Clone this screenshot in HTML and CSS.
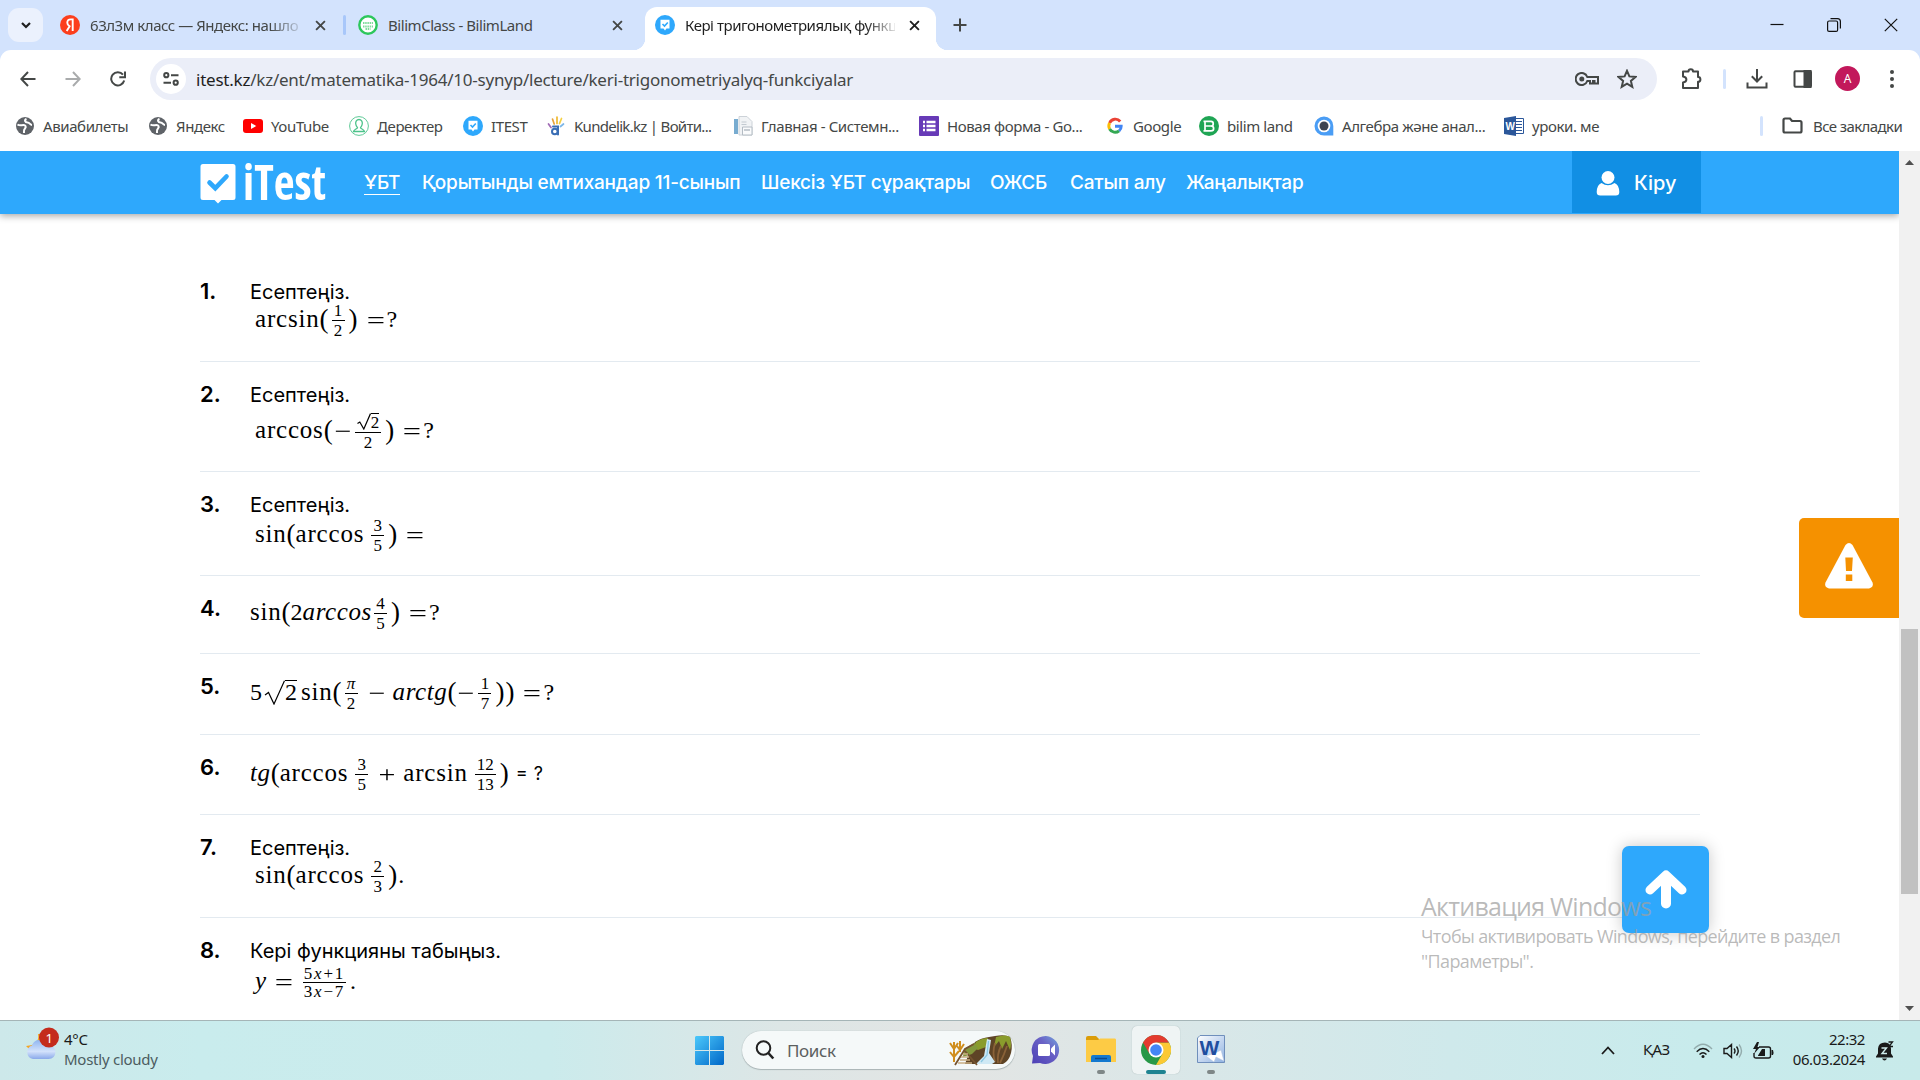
FILE: index.html
```html
<!DOCTYPE html>
<html lang="kk">

<head>
  <meta charset="UTF-8">
  <meta name="viewport" content="width=device-width, initial-scale=1.0">
  <title>Кері тригонометриялық функциялар</title>
  <link rel="stylesheet" href="styles.css">
</head>

<body>
  <!-- tabs -->
  <div class="tabstrip">
    <div class="tab-search"><svg width="12" height="12" viewBox="0 0 12 12"><path d="M2 4l4 4 4-4" fill="none" stroke="#1f1f1f" stroke-width="2.2"/></svg></div>
    <div class="tab tab-one">
      <svg class="fav" viewBox="0 0 20 20"><circle cx="10" cy="10" r="10" fill="#fc3f1d"/><path d="M12.7 16V4.4h-1.8c-2.4 0-3.6 1.4-3.6 3.3 0 1.8.9 2.7 2.3 3.6L6.7 16" fill="none" stroke="#fff" stroke-width="1.900"/></svg>
      <span class="tab-title fade">63л3м класс — Яндекс: нашло</span>
      <svg class="close" viewBox="0 0 10 10"><path d="M1 1l8 8M9 1l-8 8"/></svg>
    </div>
    <div class="tab tab-two">
      <svg class="fav" viewBox="0 0 20 20"><circle cx="10" cy="10" r="8.700" fill="#fff" stroke="#2dc75c" stroke-width="2.400"/><path d="M5 8h10M5 11.500h10M7.500 14h5" stroke="#7fdc9c" stroke-width="1.800" stroke-dasharray="1.500 .7"/></svg>
      <span class="tab-title">BilimClass - BilimLand</span>
      <svg class="close" viewBox="0 0 10 10"><path d="M1 1l8 8M9 1l-8 8"/></svg>
    </div>
    <div class="tab tab-active">
      <svg class="fav" viewBox="0 0 20 20"><circle cx="10" cy="10" r="10" fill="#2ea8fc"/><path d="M5.500 4.800h9v8.800h-3L10 15.600l-1.500-2h-3z" fill="#fff"/><path d="M7.500 9l2 2 3.300-3.500" fill="none" stroke="#2ea8fc" stroke-width="1.600"/></svg>
      <span class="tab-title fade">Кері тригонометриялық функц</span>
      <svg class="close dark" viewBox="0 0 10 10"><path d="M1 1l8 8M9 1l-8 8"/></svg>
    </div>
    <svg class="new-tab" width="14" height="14" viewBox="0 0 14 14"><path d="M7 .500v13M.500 7h13" stroke="#444746" stroke-width="2"/></svg>
    <div class="window-buttons">
      <svg width="14" height="14" viewBox="0 0 14 14"><path d="M.500 6.500h13" stroke="#111" stroke-width="1.200"/></svg>
      <svg width="14" height="14" viewBox="0 0 14 14"><rect x=".600" y="3" width="10" height="10.400" rx="1.500"/><path d="M3.500.700h7q2.900 0 2.900 2.900v7"/></svg>
      <svg width="14" height="14" viewBox="0 0 14 14"><path d="M.800.800l12.400 12.400M13.200.800L.800 13.200"/></svg>
    </div>
  </div>

  <!-- address bar -->
  <div class="toolbar-wrap">
    <div class="toolbar">
      <svg class="t-icon" viewBox="0 0 16 16"><path d="M15.500 8H1.500M8 1L1.300 8 8 15"/></svg>
      <svg class="t-icon off" viewBox="0 0 16 16"><path d="M.500 8h14M8 1l6.700 7L8 15"/></svg>
      <svg class="t-icon" viewBox="0 0 16 16"><path d="M14.200 9.500A6.600 6.600 0 1 1 13 3.700M15 .500v5.800H9.300"/></svg>
      <div class="omnibox">
        <div class="site-info"><svg width="16" height="14" viewBox="0 0 16 14"><circle cx="3.300" cy="3.200" r="2.100"/><path d="M8 3.200h7.500M.500 10.700H8"/><circle cx="12.700" cy="10.700" r="2.100"/></svg></div>
        <span class="url"><b>itest.kz</b>/kz/ent/matematika-1964/10-synyp/lecture/keri-trigonometriyalyq-funkciyalar</span>
        <svg class="key" width="24" height="14" viewBox="0 0 24 14"><path d="M12.300 5A6 6 0 1 0 12.300 9H15v2.500h3V9h1.500v2.500H23V5z"/><circle cx="6.800" cy="7" r="2.500" fill="#444746" stroke="none"/></svg>
        <svg width="20" height="20" viewBox="0 0 20 20"><path d="M10 1.800l2.400 5.600 6.100.5-4.600 4 1.400 6L10 14.700l-5.300 3.200 1.400-6-4.600-4 6.100-.5z"/></svg>
      </div>
      <svg class="puzzle" width="22" height="22" viewBox="0 0 22 22"><path d="M2 3.500h5.500a2 2 0 0 1 4.500 0h5V9a2.300 2.300 0 0 1 0 4.800V20H2v-5.500c4.500-.5 4.500-5.500 0-6z" stroke-linejoin="round"/></svg>
      <i class="divider"></i>
      <svg width="22" height="20" viewBox="0 0 22 20"><path d="M11 0v12M5.800 7.300L11 12.500l5.200-5.200M1.500 13.500v5h19v-5"/></svg>
      <svg width="20" height="18" viewBox="0 0 20 18"><rect x="1.500" y="1.300" width="16.500" height="15.400" rx="1"/><path d="M11.500 1h6v16h-6z" fill="#444746"/></svg>
      <div class="avatar">A</div>
      <svg width="6" height="20" viewBox="0 0 6 20" class="kebab"><circle cx="3" cy="3" r="2"/><circle cx="3" cy="10" r="2"/><circle cx="3" cy="17" r="2"/></svg>
    </div>
  </div>

  <!-- bookmarks -->
  <div class="bookmarks">
    <div class="bm"><svg viewBox="0 0 20 20"><circle cx="10" cy="10" r="9" fill="#5f6368"/><path d="M2.500 8.500c2.500 1.500 4 .500 6 .500s3 2 1.500 3.500-1 2.500-1 4.500M11.500 3c-2.500 1-1.500 3.500 1 3.500S15 9 17 9" fill="none" stroke="#fff" stroke-width="2"/></svg>Авиабилеты</div>
    <div class="bm"><svg viewBox="0 0 20 20"><circle cx="10" cy="10" r="9" fill="#5f6368"/><path d="M2.500 8.500c2.500 1.500 4 .500 6 .500s3 2 1.500 3.500-1 2.500-1 4.500M11.500 3c-2.500 1-1.500 3.500 1 3.500S15 9 17 9" fill="none" stroke="#fff" stroke-width="2"/></svg>Яндекс</div>
    <div class="bm"><svg viewBox="0 0 20 20"><rect y="3" width="20" height="14" rx="3" fill="#f00"/><path d="M8 7l5.300 3L8 13z" fill="#fff"/></svg>YouTube</div>
    <div class="bm"><svg viewBox="0 0 20 20" fill="none" stroke="#4cc38a"><circle cx="10" cy="10" r="9.400" stroke-width=".9"/><path d="M10 3.500c-2.500 0-3.500 2-3.300 4.300.2 2 1 3 1.800 3.800-.3 1.400-3.500 1.500-4 3.900h11c-.5-2.400-3.700-2.500-4-3.900.8-.8 1.600-1.800 1.800-3.800.2-2.300-.8-4.300-3.300-4.300z" stroke-width="1.300"/></svg>Деректер</div>
    <div class="bm"><svg viewBox="0 0 20 20"><circle cx="10" cy="10" r="10" fill="#2ea8fc"/><path d="M5.500 4.800h9v8.800h-3L10 15.600l-1.500-2h-3z" fill="#fff"/><path d="M7.500 9l2 2 3.300-3.500" fill="none" stroke="#2ea8fc" stroke-width="1.600"/></svg>ITEST</div>
    <div class="bm tight"><svg viewBox="0 0 20 20" fill="none" stroke-linecap="round"><path d="M2.500 8L5 11.500" stroke="#a06bb5" stroke-width="1.700"/><path d="M6.500 3l1.700 5" stroke="#e8a33b" stroke-width="1.700"/><path d="M11 1v6.500" stroke="#efb92f" stroke-width="1.700"/><path d="M15.500 2.500l-2 5" stroke="#f4d044" stroke-width="1.700"/><path d="M17.500 8l-3 2.500" stroke="#7db7e8" stroke-width="1.700"/><circle cx="8.800" cy="15.500" r="2.800" stroke="#3a6eb5" stroke-width="2"/><path d="M7 10.500h5v8" stroke="#3a6eb5" stroke-width="2"/></svg>Kundelik.kz | Войти...</div>
    <div class="bm"><svg viewBox="0 0 20 20"><path d="M1 3h4v15H1z" fill="#78acd0"/><path d="M6 .500h8l5 5V19H6z" fill="#f1f3f5" stroke="#ccd2d8"/><path d="M8.500 6h5M8.500 8.500h5" stroke="#c3cad1"/><path d="M9.500 11h9.500v8H9.500z" fill="#fafbfc" stroke="#b4bcc4"/><path d="M11 14h6" stroke="#b4bcc4" stroke-width="1.500"/></svg>Главная - Системн...</div>
    <div class="bm"><svg viewBox="0 0 20 20"><rect width="20" height="20" rx="1" fill="#673ab7"/><path d="M4 6h2M4 10h2M4 14h2M7.500 6h9M7.500 10h9M7.500 14h9" stroke="#fff" stroke-width="2.300"/></svg>Новая форма - Go...</div>
    <div class="bm"><svg viewBox="0 0 20 20" fill="none" stroke-width="2.900"><path d="M15.200 5.500A6.200 6.200 0 0 0 4.600 7" stroke="#ea4335"/><path d="M4.600 7a6.300 6.300 0 0 0 0 6" stroke="#fbbc05"/><path d="M4.600 13a6.200 6.200 0 0 0 9.500 1.800" stroke="#34a853"/><path d="M10 10.200h6.200a6 6 0 0 1-2.100 4.600" stroke="#4285f4"/></svg>Google</div>
    <div class="bm"><svg viewBox="0 0 20 20"><circle cx="10" cy="10" r="10" fill="#1fa554"/><path d="M4.500 5.300H12c3 0 3 4.700 0 4.700H6M12 10c3.500 0 3.500 4.800 0 4.800H4.500M6 5v10" fill="none" stroke="#fff" stroke-width="1.700"/></svg>bilim land</div>
    <div class="bm"><svg viewBox="0 0 20 20"><path d="M10 .500a9.500 9.500 0 1 0 0 19h9.300V10A9.400 9.400 0 0 0 10 .500z" fill="#4a9df5"/><circle cx="10" cy="10" r="6.300" fill="#fff"/><circle cx="10" cy="10" r="4.500" fill="#3d4450"/></svg>Алгебра және анал...</div>
    <div class="bm"><svg viewBox="0 0 20 20"><path d="M11 2.500h8.500v15H11" fill="#fff" stroke="#2b579a"/><path d="M12 5.500h6M12 8.500h6M12 11.500h6M12 14.500h6" stroke="#2b579a"/><path d="M0 2l12-2v20L0 18z" fill="#2b579a"/><text x="1.600" y="13.500" class="w-small">W</text></svg>уроки. ме</div>
    <div class="all-bm">
      <i class="divider"></i>
      <svg width="21" height="17" viewBox="0 0 21 17"><path d="M1.500 14V3q0-1.500 1.500-1.500h5l2 2.500h8q1.500 0 1.500 1.500V14q0 1.500-1.500 1.500H3q-1.500 0-1.500-1.500z"/></svg>
      <span>Все закладки</span>
    </div>
  </div>

  <div class="viewport">
    <div class="page">
      <header class="site-header">
        <div class="logo">
          <svg width="36" height="40" viewBox="0 0 36 40"><path d="M3 0h30q2.500 0 2.500 2.500v31Q35.500 36 33 36H21.500L18 39.500 14.500 36H3Q.500 36 .500 33.500v-31Q.500 0 3 0z" fill="#fff"/><path d="M9.500 18.500l5.800 5.700L26.500 12.500" fill="none" stroke="#2ea8fc" stroke-width="4.600" stroke-linecap="round"/></svg>
          <span>iTest</span>
        </div>
        <nav class="nav">
          <a class="current">ҰБТ</a>
          <a>Қорытынды емтихандар 11-сынып</a>
          <a>Шексіз ҰБТ сұрақтары</a>
          <a>ОЖСБ</a>
          <a>Сатып алу</a>
          <a>Жаңалықтар</a>
        </nav>
        <div class="login">
          <svg width="24" height="25" viewBox="0 0 24 25" fill="#fff"><ellipse cx="12" cy="6.500" rx="6.500" ry="6.500"/><path d="M5.500 12q6.500 4.500 13 0 4.500 1.500 4.800 9 0 3.500-3.500 3.500H4.200Q.700 24.500.700 21 1 13.500 5.500 12z"/></svg>
          <span>Кіру</span>
        </div>
      </header>

      <ol class="tasks">
        <li class="task h1">
          <b class="num">1.</b>
          <div class="body"><p>Есептеңіз.</p>
            <div class="math in"><span class="fn">arcsin</span><span class="par">(</span><span class="frac"><i>1</i><i>2</i></span><span class="par">)</span><span class="eq">=</span><span>?</span></div></div>
        </li>
        <li class="task h2">
          <b class="num">2.</b>
          <div class="body"><p>Есептеңіз.</p>
            <div class="math in"><span class="fn">arccos</span><span class="par">(</span><span class="neg">−</span><span class="frac"><i><svg class="root" width="14" height="17" viewBox="0 0 14 17"><path d="M.500 10.500l2.300-1.500 4 7L13.500.600"/></svg><u>2</u></i><i>2</i></span><span class="par">)</span><span class="eq">=</span><span>?</span></div></div>
        </li>
        <li class="task h3">
          <b class="num">3.</b>
          <div class="body"><p>Есептеңіз.</p>
            <div class="math in"><span class="fn">sin</span><span class="par">(</span><span class="fn">arccos</span><span class="frac sp"><i>3</i><i>5</i></span><span class="par">)</span><span class="eq">=</span></div></div>
        </li>
        <li class="task h4">
          <b class="num">4.</b>
          <div class="body">
            <div class="math"><span class="fn">sin</span><span class="par">(</span><span>2</span><em>arccos</em><span class="frac"><i>4</i><i>5</i></span><span class="par">)</span><span class="eq">=</span><span>?</span></div></div>
        </li>
        <li class="task h5">
          <b class="num">5.</b>
          <div class="body">
            <div class="math"><span>5</span><svg class="root big" width="21" height="25" viewBox="0 0 21 25"><path d="M1 15l3.500-2.500L10 24 20.500.700"/></svg><u>2</u><span class="fn after-root">sin</span><span class="par">(</span><span class="frac"><i><em>π</em></i><i>2</i></span><span class="bin">−</span><em>arctg</em><span class="par">(</span><span class="neg">−</span><span class="frac"><i>1</i><i>7</i></span><span class="par">)</span><span class="par">)</span><span class="eq">=</span><span>?</span></div></div>
        </li>
        <li class="task h6">
          <b class="num">6.</b>
          <div class="body">
            <div class="math"><em>tg</em><span class="par">(</span><span class="fn">arccos</span><span class="frac sp"><i>3</i><i>5</i></span><span class="bin">+</span><span class="fn">arcsin</span><span class="frac sp"><i>12</i><i>13</i></span><span class="par">)</span><span class="plain">= ?</span></div></div>
        </li>
        <li class="task h7">
          <b class="num">7.</b>
          <div class="body"><p>Есептеңіз.</p>
            <div class="math in"><span class="fn">sin</span><span class="par">(</span><span class="fn">arccos</span><span class="frac sp"><i>2</i><i>3</i></span><span class="par">)</span><span class="dot">.</span></div></div>
        </li>
        <li class="task h8">
          <b class="num">8.</b>
          <div class="body"><p>Кері функцияны табыңыз.</p>
            <div class="math in"><em>y</em><span class="eq">=</span><span class="frac sp poly"><i>5<em>x</em>+1</i><i>3<em>x</em>−7</i></span><span class="dot">.</span></div></div>
        </li>
      </ol>

      <div class="report"><svg width="50" height="46" viewBox="0 0 50 46"><path d="M21.500 2q3.500-4 7 0l20 37.500q1.500 5-3.500 6H5q-5-1-3.500-6z" fill="#fff"/><path d="M21.300 14.500h7.500L28 28h-6zM21.800 31.500h6.500v6.500h-6.500z" fill="#f59100"/></svg></div>
      <div class="to-top"><svg width="42" height="40" viewBox="0 0 42 40"><path d="M5 20L21 5l16 15" fill="none" stroke="#fff" stroke-width="9" stroke-linecap="round" stroke-linejoin="round"/><path d="M21 8v25.500" stroke="#fff" stroke-width="10" stroke-linecap="round"/></svg></div>
    </div>
    <div class="scrollbar">
      <svg width="9" height="5" viewBox="0 0 9 5"><path d="M0 5l4.500-5L9 5z"/></svg>
      <div class="thumb"></div>
      <svg width="9" height="5" viewBox="0 0 9 5"><path d="M0 0l4.500 5L9 0z"/></svg>
    </div>
  </div>

  <div class="activate">
    <h2>Активация Windows</h2>
    <p>Чтобы активировать Windows, перейдите в раздел<br>"Параметры".</p>
  </div>

  <!-- taskbar -->
  <div class="taskbar">
    <div class="weather">
      <svg width="36" height="34" viewBox="0 0 36 34">
        <defs><linearGradient id="cloud" x1="0" y1="0" x2="0" y2="1"><stop offset="0" stop-color="#8fb5f0"/><stop offset=".6" stop-color="#d3e2fb"/><stop offset="1" stop-color="#8aa9ea"/></linearGradient></defs>
        <path d="M13 7q2 11-12 12 4 5 11 4 8-2 6-16z" fill="#f5a623"/>
        <path d="M8 32a7 7 0 0 1-1-13.500q2-6 8-5.500 6 0 8 6 7-1 7.500 6-.5 7-7 7z" fill="url(#cloud)"/>
        <circle cx="24" cy="10.500" r="10" fill="#c42b1c"/><text x="20.500" y="15.500" class="badge">1</text>
      </svg>
      <div class="weather-text"><span>4°C</span><span class="dim">Mostly cloudy</span></div>
    </div>
    <div class="apps">
      <svg class="start" width="29" height="29" viewBox="0 0 29 29"><defs><linearGradient id="win" x1="0" y1="0" x2="1" y2="1"><stop offset="0" stop-color="#4cc9fb"/><stop offset="1" stop-color="#0067c8"/></linearGradient></defs><path d="M1 0h13v14H0V1zM15 0h13l1 1v13H15zM0 15h14v14H1l-1-1zM15 15h14v13l-1 1H15z" fill="url(#win)"/></svg>
      <div class="search">
        <svg width="20" height="20" viewBox="0 0 20 20"><circle cx="8.500" cy="8" r="6.800" fill="none" stroke="#222" stroke-width="2"/><path d="M13.300 13l5 5.500" stroke="#222" stroke-width="2.600"/></svg>
        <span>Поиск</span>
        <svg class="falls" width="64" height="32" viewBox="0 0 64 32">
          <path d="M26 8q6-4 14-5l6-1q10-2 15 1 3 8 1 16-2 8-8 11H16l4-11z" fill="#5e4426"/>
          <path d="M27 8q6-4 12-4l-2 9-8 3-5-2zM47 3q10-3 14 0 2 7 0 13l-4-9-4 8-3-8-5 6z" fill="#8a9c2c"/>
          <path d="M46 9q-3 10 0 19M52 12q-4 8-3 17M58 12q-3 9-7 17" stroke="#8a6238" stroke-width="1.800" fill="none"/>
          <path d="M15 15l10-6 4 5-6 6-9 3z" fill="#83983c"/>
          <path d="M38 5l4 1-2 13 6 9-3 2H27l8-8z" fill="#cfe9f5"/>
          <path d="M39.500 7l-1.500 14-6 7" stroke="#8bc8e3" fill="none" stroke-width="1.300"/>
          <path d="M6 31l10-16 9-5M16 17l12 14" stroke="#75532f" stroke-width="1.800" fill="none"/>
          <path d="M9 29h14M11 26h10M12 23h8M14 20h5" stroke="#c9ae84" stroke-width="1.600"/>
          <path d="M5 8v20M1 9l4 6 4-6M1 18l4 5 5-6M11 7v11M8 12l3 4 4-6" stroke="#d08e1e" stroke-width="2" fill="none"/>
        </svg>
      </div>
      <div class="app meet"><svg width="30" height="30" viewBox="0 0 30 30"><defs><linearGradient id="meet" x1="0" y1="1" x2="1" y2="0"><stop offset="0" stop-color="#4c3fb5"/><stop offset=".6" stop-color="#6a62c6"/><stop offset="1" stop-color="#74a7dd"/></linearGradient></defs><path d="M15 1a14 14 0 1 1-6 27l-8 .500L2 21A14 14 0 0 1 15 1z" fill="url(#meet)"/><rect x="7" y="9" width="12" height="12" rx="1.500" fill="#fff"/><path d="M20 13.500l4-4v11L20 16.500z" fill="#fff"/></svg></div>
      <div class="app folder"><svg width="30" height="28" viewBox="0 0 30 28"><path d="M0 3q0-2 2-2h8l4 4H0z" fill="#db9d09"/><path d="M0 5h12l2-1.500h15q1 0 1 1.500v22H0z" fill="#fdcb45"/><path d="M5 27v-5q0-2 2-2h16q2 0 2 2v5z" fill="#1479cf"/><path d="M9 23.500h12" stroke="#0a4a91" stroke-width="1.500"/></svg><i></i></div>
      <div class="app chrome"><svg width="30" height="30" viewBox="0 0 30 30"><circle cx="15" cy="15" r="15" fill="#279847"/><path d="M28 7.500H15L21.500 18.700 15 30A15 15 0 0 0 28 7.500z" fill="#fcc934"/><path d="M2 7.500L8.500 18.700 15 7.500h13A15 15 0 0 0 2 7.500z" fill="#e33b2e"/><circle cx="15" cy="15" r="7.500" fill="#fff"/><circle cx="15" cy="15" r="5.800" fill="#4386f5"/></svg><i></i></div>
      <div class="app word"><svg width="28" height="28" viewBox="0 0 28 28"><defs><linearGradient id="doc" x1="0" y1="0" x2="1" y2="1"><stop offset="0" stop-color="#fff"/><stop offset="1" stop-color="#8fb2e2"/></linearGradient></defs><path d="M3 .500h24.500v27H.500V3z" fill="url(#doc)" stroke="#6f8fbc"/><path d="M9 21l9-3 6-3 3 11-8-4-2 5z" fill="#fff" stroke="#b1c3df" stroke-width=".5"/><text x="2.500" y="20" class="w-big">W</text></svg><i></i></div>
    </div>
    <div class="tray">
      <svg class="chev" width="14" height="9" viewBox="0 0 14 9"><path d="M1 8l6-6.500L13 8"/></svg>
      <span class="lang">ҚАЗ</span>
      <svg width="20" height="16" viewBox="0 0 20 16"><path d="M1 6q9-9.500 18 0" opacity=".3"/><path d="M3.700 8.700q6.300-6.500 12.600 0M6.500 11.500q3.500-3.500 7 0"/><circle cx="10" cy="13.500" r="1.500" fill="#1a1a1a" stroke="none"/></svg>
      <svg width="20" height="16" viewBox="0 0 20 16"><path d="M1 5.500h3L8.500 1.500v13L4 10.500H1zM11 5.500q2 2.500 0 5M13.500 3.500q3.500 4.500 0 9"/><path d="M16 1.500q5 6.500 0 13" opacity=".3"/></svg>
      <svg width="21" height="18" viewBox="0 0 21 18"><path d="M6 5h9.500q2 0 2 2v7q0 2-2 2H3q-2 0-2-2v-3"/><path d="M5 13.500L9 7h3v7H5zM4 0L0 7h3L1 12l6-7H4.500L6 0zM18.500 8H20q1 2.500 0 5h-1.500z" fill="#1a1a1a" stroke="none"/></svg>
      <div class="clock"><span>22:32</span><span>06.03.2024</span></div>
      <svg width="18" height="20" viewBox="0 0 18 20" class="bell"><path d="M9 1.500q5.500 0 6 6v5l2 3v1H0v-1l2-3v-5q.500-6 7-6zM6 17.500h5q-1 2-2.500 2t-2.500-2z"/><path d="M5.500 7h5L6 12.500h5" stroke="#cfeaea" fill="none" stroke-width="1.400"/><path d="M12.500 1h4L13 5.500h4" stroke="#1a1a1a" fill="none" stroke-width="1.300"/></svg>
    </div>
  </div>
</body>

</html>
```
FILE: styles.css
```css
* {
  margin: 0;
  padding: 0;
  box-sizing: border-box;
}

body {
  width: 1920px;
  height: 1080px;
  overflow: hidden;
  position: relative;
  background: #fff;
  font-family: 'Noto Sans', 'Open Sans', sans-serif;
  font-size: 15px;
  color: #444746;
}

svg {
  display: block;
  flex-shrink: 0;
}

/* tabs */
.tabstrip {
  display: flex;
  align-items: center;
  height: 50px;
  background: #d3e3fd;
  padding-left: 8px;
}

.tab-search {
  width: 35px;
  height: 34px;
  border-radius: 11px;
  background: #ebf1fd;
  display: flex;
  align-items: center;
  justify-content: center;
}

.tab {
  display: flex;
  align-items: center;
  height: 42px;
  padding-left: 10px;
}

.tab-one {
  width: 288px;
  margin-left: 7px;
  padding-left: 10px;
}

.tab-two {
  width: 300px;
  margin-left: 7px;
  padding-left: 13px;
  position: relative;
}

.tab-two::before {
  content: "";
  position: absolute;
  left: -2px;
  top: 11px;
  width: 3px;
  height: 20px;
  border-radius: 2px;
  background: #a8c7fa;
}

.tab-active {
  position: relative;
  width: 291px;
  height: 43px;
  padding-bottom: 7px;
  align-self: flex-end;
  background: #fff;
  border-radius: 12px 12px 0 0;
  color: #1f1f1f;
}

.tab-active::before,
.tab-active::after {
  content: "";
  position: absolute;
  bottom: 0;
  left: -12px;
  width: 12px;
  height: 12px;
  background: radial-gradient(circle at 0 0, transparent 12px, #fff 12.5px);
}

.tab-active::after {
  left: auto;
  right: -12px;
  background: radial-gradient(circle at 100% 0, transparent 12px, #fff 12.5px);
}

.fav {
  width: 20px;
  height: 20px;
}

.tab-title {
  width: 210px;
  margin-left: 10px;
  white-space: nowrap;
  letter-spacing: -0.45px;
}

.tab-two .tab-title {
  width: 225px;
}

.fade {
  -webkit-mask-image: linear-gradient(90deg, #000 180px, rgba(0, 0, 0, .15) 210px);
}

.close {
  width: 11px;
  height: 11px;
  margin-left: 15px;
  stroke: #444746;
  stroke-width: 1.7;
}

.tab-two .close {
  margin-left: -1px;
}

.close.dark {
  stroke: #1f1f1f;
  margin-left: 14px;
}

.new-tab {
  margin-left: 17px;
}

.window-buttons {
  margin-left: auto;
  margin-right: 22px;
  display: flex;
  gap: 43px;
}

.window-buttons svg {
  fill: none;
  stroke: #111;
  stroke-width: 1.2;
}

/* address bar */
.toolbar-wrap {
  background: #d3e3fd;
}

.toolbar {
  display: flex;
  align-items: center;
  height: 58px;
  padding-left: 20px;
  background: #fff;
  border-radius: 11px 11px 0 0;
}

.toolbar svg {
  fill: none;
  stroke: #444746;
  stroke-width: 2;
}

.t-icon {
  width: 16px;
  height: 16px;
  margin-right: 29px;
}

.toolbar .off {
  stroke: #a9abac;
}

.omnibox {
  display: flex;
  align-items: center;
  width: 1507px;
  height: 42px;
  margin-left: -5px;
  padding-left: 6px;
  border-radius: 21px;
  background: #ebeef8;
}

.site-info {
  width: 30px;
  height: 30px;
  border-radius: 50%;
  background: #fff;
  display: flex;
  align-items: center;
  justify-content: center;
}

.url {
  margin-left: 10px;
  font-size: 17px;
  width: 1379px;
  letter-spacing: -0.23px;
}

.url b {
  font-weight: 400;
  color: #1f1f1f;
}

.key {
  margin-right: 18px;
}

.puzzle {
  margin: 0 20px 0 24px;
}

.divider {
  width: 3px;
  height: 20px;
  border-radius: 2px;
  background: #d3e3fd;
}

.toolbar .divider + svg {
  margin-left: 20px;
  margin-right: 25px;
}

.avatar {
  width: 25px;
  height: 25px;
  margin: -2px 29px 0 22px;
  border-radius: 50%;
  background: #c2185b;
  color: #fff;
  font-size: 12px;
  line-height: 25px;
  text-align: center;
}

.toolbar .kebab {
  fill: #444746;
  stroke: none;
}

/* bookmarks */
.bookmarks {
  display: grid;
  grid-template-columns: 133px 95px 106px 114px 83px 187px 186px 186px 94px 115px 190px 256px 1fr;
  align-items: center;
  height: 43px;
  padding: 0 0 8px 15px;
}

.bm {
  display: flex;
  align-items: center;
  gap: 8px;
  white-space: nowrap;
  letter-spacing: -0.4px;
}

.bm.tight {
  letter-spacing: -0.7px;
}

.bm svg {
  width: 20px;
  height: 20px;
}

.w-small {
  font: bold 10px 'Liberation Sans', sans-serif;
  fill: #fff;
}

.all-bm {
  display: flex;
  align-items: center;
  white-space: nowrap;
  letter-spacing: -0.6px;
}

.all-bm svg {
  margin: 0 10px 0 19px;
  fill: none;
  stroke: #444746;
  stroke-width: 2.2;
}

/* page */
.viewport {
  display: flex;
  height: 869px;
}

.page {
  position: relative;
  width: 1899px;
  overflow: hidden;
  font-family: Inter, sans-serif;
  color: #000;
}

.site-header {
  position: relative;
  display: flex;
  height: 63px;
  padding-left: 200px;
  background: #2ea8fc;
  box-shadow: 0 2px 7px rgba(0, 0, 0, .35);
  color: #fff;
}

.logo {
  display: flex;
  width: 164px;
  padding-top: 13px;
}

.logo span {
  margin: -2px 0 0 7px;
  font: bold 49px/38px 'Open Sans', sans-serif;
  font-stretch: 75%;
  transform: scaleX(.93);
  transform-origin: 0 0;
}

.nav {
  display: grid;
  grid-template-columns: 58px 339px 229px 80px 116px 385px;
  align-items: center;
  padding-top: 2px;
  font-size: 19px;
  font-weight: 500;
  letter-spacing: -0.2px;
  white-space: nowrap;
}

.nav a {
  justify-self: start;
  line-height: 22px;
  border-bottom: 1px solid transparent;
}

.nav .current {
  border-color: #fff;
}

.login {
  display: flex;
  align-items: center;
  gap: 14px;
  width: 129px;
  height: 62px;
  margin-left: 1px;
  padding: 2px 0 0 24px;
  background: #118fe4;
  font-size: 20px;
  font-weight: 500;
}

.tasks {
  width: 1500px;
  margin: 45px 0 0 200px;
  list-style: none;
}

.task {
  display: flex;
  height: 103px;
  padding-top: 21px;
  border-bottom: 1px solid #e3eaf0;
  font-size: 20px;
  line-height: 24px;
}

.task .num {
  width: 50px;
  font-size: 22px;
  font-weight: 600;
  line-height: 23px;
}

.h2 { height: 110px; }
.h3 { height: 104px; }
.h4 { height: 78px; }
.h5 { height: 81px; }
.h6 { height: 80px; }
.h8 { border: none; }

.h2 .math { margin-top: 8px; }
.h3 .math { margin-top: 2px; }
.h5 .math,
.h6 .math { margin-top: 2px; }
.h8 .math { margin-top: 3px; }

/* formulas */
.math {
  display: flex;
  align-items: center;
  height: 30px;
  font-family: 'Liberation Serif', serif;
  font-size: 24px;
  line-height: 30px;
}

.math.in {
  padding-left: 5px;
}

.math .fn,
.math > em {
  margin-right: -1px;
  font-size: 25px;
  letter-spacing: 0.8px;
}

.math > em {
  letter-spacing: 0.6px;
}

.math .par {
  width: 9px;
  margin: 0 0 0 1px;
  font-size: 27px;
}

.math .eq {
  width: 18px;
  margin: 2px 2px 0 9px;
  text-align: center;
  transform: scaleX(1.35);
}

.math .neg {
  width: 16px;
  margin: 2px 1px 0 2px;
  text-align: center;
  transform: scaleX(1.25);
}

.math .bin {
  width: 16px;
  margin: 2px 8px 0 8px;
  text-align: center;
  transform: scaleX(1.25);
}

.frac {
  display: flex;
  flex-direction: column;
  align-items: center;
  min-width: 13px;
  margin: 3px 3px 0 3px;
  font-size: 17px;
  line-height: 17px;
}

.frac i {
  display: flex;
  justify-content: center;
  width: 100%;
  padding: 0 2px;
  font-style: normal;
}

.frac i:first-of-type {
  padding-bottom: 1px;
  border-bottom: 1px solid #000;
}

.frac i:last-of-type {
  padding-top: 1px;
}

.frac.sp {
  margin-left: 8px;
}

.frac.poly i {
  padding: 0 1px;
  letter-spacing: 1.8px;
}

.root {
  fill: none;
  stroke: #000;
  stroke-width: 1.2;
}

.math u {
  text-decoration: none;
  border-top: 1px solid #000;
}

.math > u {
  height: 25px;
  line-height: 23px;
}

.root.big {
  margin-left: 2px;
}

.math .after-root {
  margin-left: 4px;
}

.plain {
  margin-left: 7px;
  font: 18px Inter, sans-serif;
  word-spacing: 1px;
}

.dot {
  margin-left: 1px;
}

.report {
  position: absolute;
  right: 0;
  top: 367px;
  width: 100px;
  height: 100px;
  display: flex;
  align-items: center;
  justify-content: center;
  padding-bottom: 4px;
  border-radius: 5px 0 0 5px;
  background: #f59100;
}

.to-top {
  position: absolute;
  left: 1622px;
  top: 695px;
  width: 87px;
  height: 87px;
  display: flex;
  align-items: center;
  justify-content: center;
  border-radius: 7px;
  background: #2ea8fc;
  box-shadow: 0 0 16px rgba(0, 0, 0, .22);
}

.scrollbar {
  display: flex;
  flex-direction: column;
  align-items: center;
  width: 21px;
  padding: 9px 0 9px;
  background: #f1f1f1;
}

.scrollbar svg {
  fill: #505050;
}

.thumb {
  width: 17px;
  height: 265px;
  margin: 464px 0 112px;
  background: #c1c1c1;
}

.activate {
  position: absolute;
  left: 1421px;
  top: 888px;
  color: rgba(160, 160, 160, .72);
  font-family: 'Open Sans', 'Noto Sans', sans-serif;
}

.activate h2 {
  font-size: 25px;
  font-weight: 400;
  line-height: 36px;
  letter-spacing: -0.75px;
}

.activate p {
  font-size: 18px;
  line-height: 25px;
  letter-spacing: -0.63px;
  white-space: nowrap;
}

/* taskbar */
.taskbar {
  display: flex;
  height: 60px;
  border-top: 1px solid #a5b5b7;
  background: linear-gradient(90deg, #cde8ea 0, #c9eced 200px, #cbebec 550px, #dde6e6 780px, #e3e5e4 960px, #d9e7e8 1200px, #cfe9eb 1450px, #c8ebec 1700px, #c8eaea);
  color: #1a1a1a;
}

.weather {
  display: flex;
  width: 695px;
  padding: 6px 0 0 25px;
}

.weather-text {
  display: flex;
  flex-direction: column;
  margin-left: 3px;
  padding-top: 2px;
  line-height: 20px;
  letter-spacing: -0.25px;
}

.dim {
  color: #4c5c60;
}

.badge {
  font: 13px 'Noto Sans', sans-serif;
  fill: #fff;
}

.apps {
  display: flex;
  width: 906px;
  padding-top: 5px;
}

.start {
  margin: 10px 18px 0 0;
}

.search {
  display: flex;
  align-items: center;
  width: 273px;
  height: 38px;
  margin-top: 5px;
  padding: 0 2px 0 13px;
  border-radius: 19px;
  background: #f5f9f9;
  box-shadow: 0 1px 1px #a9b4b5, 0 0 1px #9caaab;
  font-size: 17px;
  color: #5c5f60;
}

.search span {
  margin-left: 12px;
  letter-spacing: -0.4px;
}

.falls {
  margin-left: auto;
}

.app {
  display: flex;
  flex-direction: column;
  align-items: center;
  justify-content: space-between;
  width: 48px;
  height: 48px;
  padding-top: 9px;
  margin-right: 7px;
}

.meet {
  margin-left: 7px;
}

.app i {
  width: 8px;
  height: 4px;
  border-radius: 2px;
  background: #7f8787;
}

.chrome {
  border-radius: 5px;
  background: #eff4f4;
  box-shadow: 0 0 1px #9aa;
}

.chrome i {
  width: 20px;
  background: #1f8391;
}

.w-big {
  font: bold 21px 'Liberation Sans', sans-serif;
  fill: #1f4e9f;
}

.tray {
  display: flex;
  align-items: center;
  font-size: 15px;
}

.tray svg {
  fill: none;
  stroke: #1a1a1a;
  stroke-width: 1.4;
  margin-right: 10px;
}

.tray .chev {
  stroke-width: 1.8;
  margin-right: 28px;
}

.lang {
  width: 26px;
  margin: -3px 24px 0 0;
  letter-spacing: -0.5px;
}

.clock {
  display: flex;
  flex-direction: column;
  align-items: flex-end;
  width: 81px;
  margin: -4px 11px 0 0;
  line-height: 20px;
  letter-spacing: -0.45px;
}

.tray .bell {
  fill: #1a1a1a;
  stroke: none;
}
```
